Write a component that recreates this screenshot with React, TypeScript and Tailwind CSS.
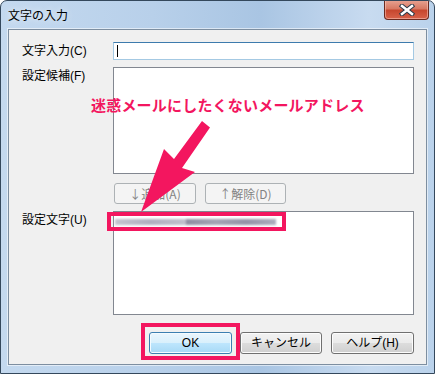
import React from "react"

const btnBase =
  "flex items-center justify-center rounded-[3px] border text-[12px] leading-none"
const btnNormal =
  "border-[#707070] text-black bg-[linear-gradient(#f2f2f2_0%,#ebebeb_49%,#dddddd_50%,#cfcfcf_100%)] shadow-[inset_0_0_0_1px_#fcfcfc]"
const btnDefault =
  "border-[#3c7fb1] text-black bg-[linear-gradient(#eaf6fd_0%,#d9f0fc_49%,#bee6fd_50%,#a7d9f5_100%)] shadow-[inset_0_0_0_1px_#f4fbff]"
const btnDisabled = "border-[#adb2b5] text-[#838383] bg-[#f4f4f4]"

function CloseIcon() {
  return (
    <svg width="16" height="12" viewBox="0 0 16 12">
      <path d="M3 2 L13 10 M13 2 L3 10" stroke="#2c3a48" strokeWidth="4.5" strokeLinecap="square" />
      <path d="M3 2 L13 10 M13 2 L3 10" stroke="#ffffff" strokeWidth="2.5" strokeLinecap="square" />
    </svg>
  )
}

export default function App() {
  return (
    <div className="relative w-[435px] h-[374px] overflow-hidden rounded-t-[7px] border border-[#34485c] bg-[linear-gradient(90deg,#c4d9ef_0%,#b8d0ea_35%,#a9c5e3_60%,#c8dbf0_85%,#bad2eb_100%)] font-['Liberation_Sans','Noto_Sans_CJK_JP',sans-serif] text-black">
      {/* Title bar */}
      <div className="flex h-[28px] items-start justify-between pl-[7px] pr-[5px]">
        <span className="mt-[7px] text-[12px] leading-[16px] text-black [text-shadow:0_0_6px_rgba(255,255,255,0.9)]">文字の入力</span>
        <div className="-mt-[1px] flex h-[20px] w-[45px] items-center justify-center rounded-b-[4px] border border-t-0 border-[#6b2a20] bg-[linear-gradient(#e8a493_0%,#d87a64_45%,#c7472f_55%,#d8624a_100%)] shadow-[inset_0_0_0_1px_rgba(255,210,200,0.5)]">
          <CloseIcon />
        </div>
      </div>

      {/* Client area */}
      <div className="mx-[7px] h-[336px] border border-[#7d8ea0] bg-[#f0f0f0] pl-[13px] pt-[12px] shadow-[0_0_0_1px_rgba(255,255,255,0.55)]">
        <div className="flex items-center">
          <span className="w-[91px] text-[12px] leading-[14px]">文字入力(C)</span>
          <div className="flex h-[18px] w-[301px] items-center border border-[#a4c9e3] border-t-[#3d7bad] bg-white pl-[3px]">
            <div className="h-[12px] w-[1px] bg-black" />
          </div>
        </div>

        <div className="mt-[7px] flex items-start">
          <span className="w-[91px] pt-[2px] text-[12px] leading-[14px]">設定候補(F)</span>
          <div className="h-[107px] w-[301px] border border-[#828790] bg-white" />
        </div>

        <div className="mt-[9px] flex pl-[92px] font-['Noto_Sans_CJK_JP',sans-serif]">
          <div className={`${btnBase} ${btnDisabled} h-[21px] w-[82px]`}>↓追加(A)</div>
          <div className={`${btnBase} ${btnDisabled} ml-[9px] h-[21px] w-[81px]`}>↑解除(D)</div>
        </div>

        <div className="mt-[7px] flex items-start">
          <span className="w-[91px] pt-[2px] text-[12px] leading-[14px]">設定文字(U)</span>
          <div className="h-[104px] w-[301px] border border-[#828790] bg-white">
            <div className="ml-[1px] mt-[6px] flex h-[7px] items-center blur-[1.2px]">
              <div className="h-[6px] w-[71px] bg-[linear-gradient(90deg,#c4c4d0,#b0b0c0,#c0c0cc)]" />
              <div className="h-[6px] w-[90px] bg-[linear-gradient(90deg,#8e8ea2,#a4a4b4,#9494a8,#acacbc)]" />
            </div>
          </div>
        </div>

        <div className="mt-[17px] flex pl-[127px]">
          <div className={`${btnBase} ${btnDefault} h-[22px] w-[83px]`}>OK</div>
          <div className={`${btnBase} ${btnNormal} ml-[8px] h-[22px] w-[82px]`}>キャンセル</div>
          <div className={`${btnBase} ${btnNormal} ml-[9px] h-[22px] w-[83px]`}>ヘルプ(H)</div>
        </div>
      </div>

      {/* Annotation overlay */}
      <div className="absolute left-[90px] top-[95px] text-[15px] font-bold leading-[18px] tracking-[0.2px] text-[#f3165f] font-['Noto_Sans_CJK_JP',sans-serif]">
        迷惑メールにしたくないメールアドレス
      </div>
      <svg className="pointer-events-none absolute left-0 top-0" width="435" height="374">
        <polygon
          points="209,126.5 181,167 194,171 140,211 163,148 173,158 201,120"
          fill="#f3165f"
        />
      </svg>
      <div className="pointer-events-none absolute left-[106px] top-[211px] h-[19px] w-[179px] border-[4px] border-[#f3165f]" />
      <div className="pointer-events-none absolute left-[140px] top-[322px] h-[37px] w-[99px] border-[4px] border-[#f3165f]" />
    </div>
  )
}
